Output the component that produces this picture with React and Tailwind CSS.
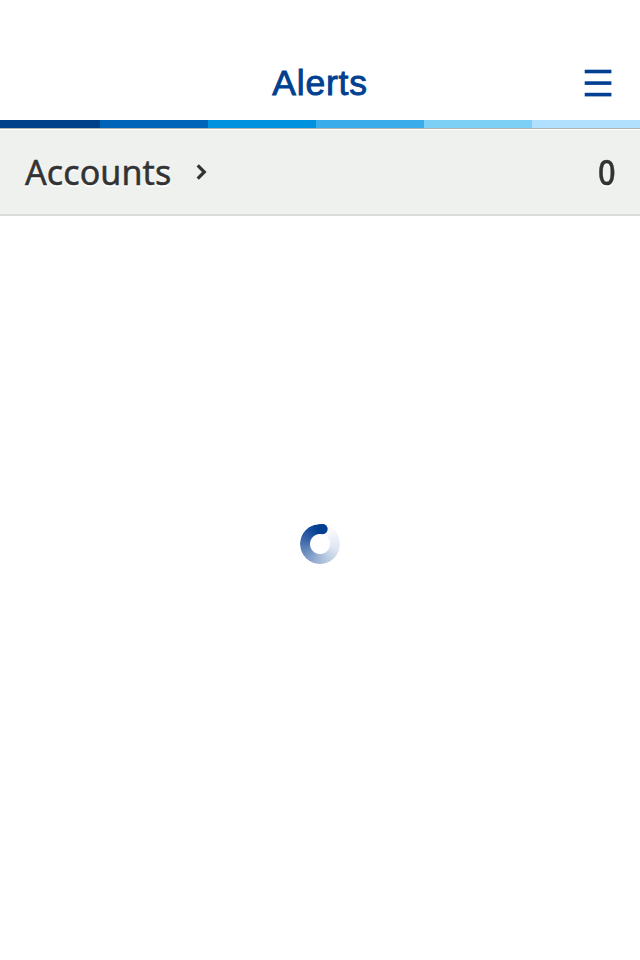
const stripes = [
  'w-[100px] bg-[#00408b]',
  'w-[108px] bg-[#0064b9]',
  'w-[108px] bg-[#0092df]',
  'w-[108px] bg-[#39adeb]',
  'w-[108px] bg-[#7cd0f6]',
  'w-[108px] bg-[#b1e0ff]',
];

function Header() {
  return (
    <header className="grid h-[120px] grid-cols-[1fr_auto_1fr] pt-[46px]">
      <span />
      <h1 className="h-[74px] font-['Liberation_Sans',sans-serif] text-[35.5px] leading-[74px] tracking-[0.8px] text-[#00408f] [-webkit-text-stroke:0.9px_#00408f]">
        Alerts
      </h1>
      <button aria-label="Menu" className="mt-[23px] mr-[28px] h-[29px] w-[28px] justify-self-end">
        <svg width="28" height="29" viewBox="0 0 28 29" fill="#003f91" className="block">
          <rect x="0.7" y="0.7" width="26.7" height="3.6" />
          <rect x="0.7" y="12.3" width="26.7" height="3.6" />
          <rect x="0.7" y="23.8" width="26.7" height="3.6" />
        </svg>
      </button>
    </header>
  );
}

function AccountsRow() {
  return (
    <section className="flex h-[88px] items-center border-t border-b-2 border-t-[#b0b2b3] border-b-[#dadcda] bg-[#eff1ef] pr-[25px] pl-[25px] font-['Noto_Sans',sans-serif] text-[34px] text-[#333] shadow-[inset_0_1px_0_#fff] [text-shadow:0_2px_0_#fff]">
      <span className="w-[147px] pt-px tracking-[0.1px] [-webkit-text-stroke:0.5px_#333]">Accounts</span>
      <svg width="12" height="18" viewBox="0 0 12 18" className="ml-[23px]" fill="none" stroke="#333" strokeWidth="3.2">
        <path d="M2.7 2.4L9.3 9L2.7 15.6" />
      </svg>
      <span className="ml-auto origin-right scale-x-[0.9] pt-px font-medium [-webkit-text-stroke:0.5px_#333]">0</span>
    </section>
  );
}

function Spinner() {
  return (
    <svg width="42" height="42" viewBox="0 0 42 42">
      <foreignObject width="42" height="42">
        <div className="m-[1px] size-10 rounded-full bg-[conic-gradient(from_14deg,#ffffff_0deg,#f5f5fc_35deg,#dfe7f3_90deg,#b2c5de_150deg,#7795c4_215deg,#3c68aa_270deg,#14489a_315deg,#003e91_338deg,#003e91_360deg)] [mask:radial-gradient(circle,transparent_9.5px,black_10.5px)]" />
      </foreignObject>
      <circle cx="23.6" cy="6.1" r="5.1" fill="#003e91" />
    </svg>
  );
}

export default function App() {
  return (
    <div className="flex h-[960px] w-[640px] flex-col overflow-hidden bg-white">
      <Header />
      <div className="flex h-2">
        {stripes.map((stripe) => (
          <div key={stripe} className={stripe} />
        ))}
      </div>
      <AccountsRow />
      <main className="flex flex-1 justify-center pt-[307px]">
        <Spinner />
      </main>
    </div>
  );
}
